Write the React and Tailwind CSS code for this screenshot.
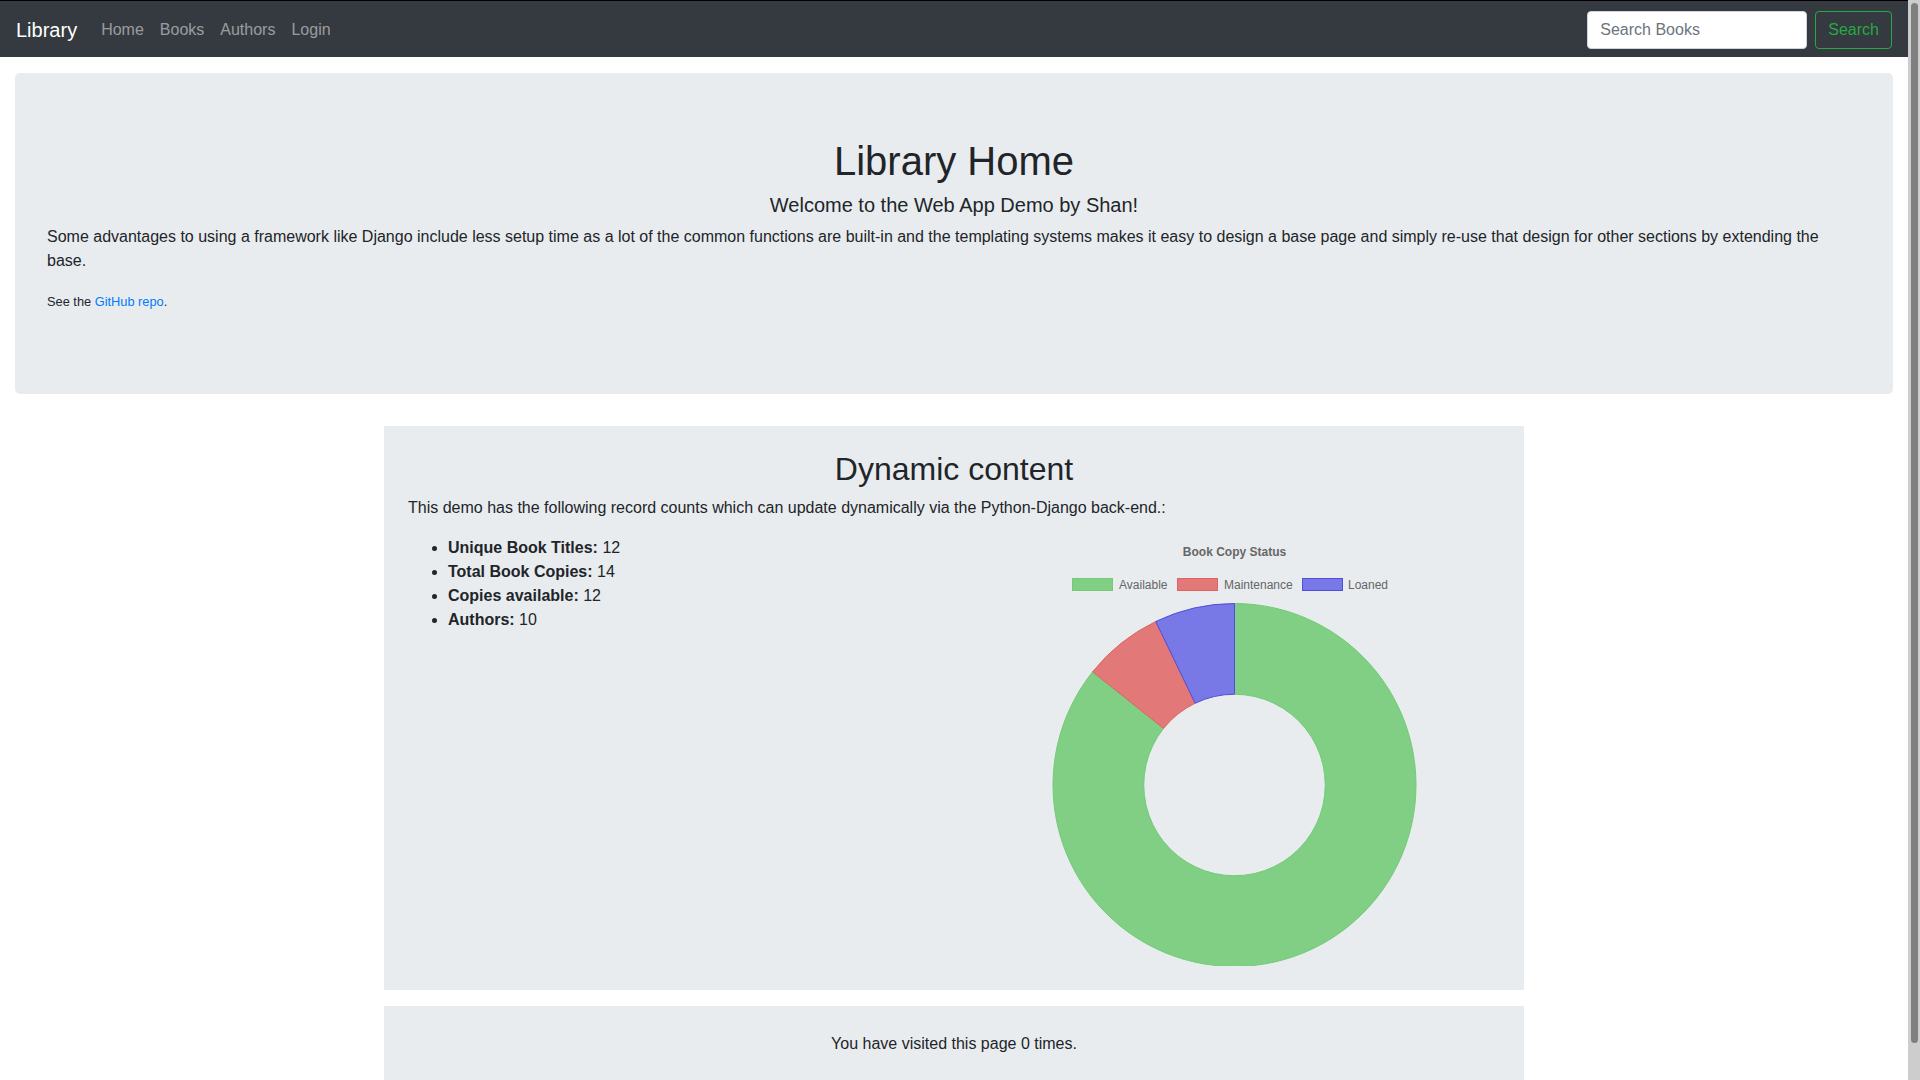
import React from 'react';

const slices = [
  { label: 'Available', value: 12, fill: '#80cf84', stroke: '#72cc76' },
  { label: 'Maintenance', value: 1, fill: '#e27878', stroke: '#dc6464' },
  { label: 'Loaned', value: 1, fill: '#7878e6', stroke: '#4f4fd9' },
];

const arcPath = (cx, cy, r1, r0, a0, a1) => {
  const pt = (r, a) => [cx + r * Math.sin(a), cy - r * Math.cos(a)];
  const large = a1 - a0 > Math.PI ? 1 : 0;
  const [x1, y1] = pt(r1, a0);
  const [x2, y2] = pt(r1, a1);
  const [x3, y3] = pt(r0, a1);
  const [x4, y4] = pt(r0, a0);
  return `M${x1} ${y1} A${r1} ${r1} 0 ${large} 1 ${x2} ${y2} L${x3} ${y3} A${r0} ${r0} 0 ${large} 0 ${x4} ${y4} Z`;
};

const DonutChart = () => {
  const total = slices.reduce((s, d) => s + d.value, 0);
  const cx = 265.5;
  const cy = 249;
  const rOut = 181.5;
  const rIn = 90.75;
  let start = 0;
  const legend = [
    { x: 103, tx: 150 },
    { x: 208, tx: 255 },
    { x: 333, tx: 379 },
  ];

  return (
    <svg width="531" height="430" className="block">
      <text
        x={cx}
        y="20"
        textAnchor="middle"
        fontSize="12"
        fontWeight="bold"
        fill="#666"
        fontFamily="'Liberation Sans', Arial, sans-serif"
      >
        Book Copy Status
      </text>
      {slices.map((s, i) => (
        <g key={s.label}>
          <rect x={legend[i].x + 0.5} y="42.5" width="40" height="12" fill={s.fill} stroke={s.stroke} strokeWidth="1" />
          <text
            x={legend[i].tx}
            y="52.5"
            fontSize="12"
            fill="#666"
            fontFamily="'Liberation Sans', Arial, sans-serif"
          >
            {s.label}
          </text>
        </g>
      ))}
      {slices.map((s) => {
        const a0 = start;
        const a1 = start + (s.value / total) * Math.PI * 2;
        start = a1;
        return (
          <path
            key={s.label}
            d={arcPath(cx, cy, rOut, rIn, a0, a1)}
            fill={s.fill}
            stroke={s.stroke}
            strokeWidth="1"
          />
        );
      })}
    </svg>
  );
};

const App = () => {
  return (
    <div className="flex h-screen overflow-hidden bg-white text-[#212529] font-['Liberation_Sans',Arial,sans-serif]">
      <div className="flex-1 min-w-0">
        {/* Navbar */}
        <nav className="flex items-center justify-between bg-[#343a40] border-t border-black px-4 pt-[9px] pb-[7px]">
          <div className="flex items-center">
            <a className="text-xl leading-[30px] py-[5px] mr-4 text-white">Library</a>
            <a className="px-2 py-2 text-base leading-6 text-white/50">Home</a>
            <a className="px-2 py-2 text-base leading-6 text-white/50">Books</a>
            <a className="px-2 py-2 text-base leading-6 text-white/50">Authors</a>
            <a className="px-2 py-2 text-base leading-6 text-white/50">Login</a>
          </div>
          <div className="flex items-center">
            <input
              type="text"
              placeholder="Search Books"
              className="h-[38px] w-[220px] px-3 mr-2 rounded bg-white border border-[#ced4da] text-base text-[#495057] placeholder:text-[#6c757d] outline-none"
            />
            <button className="h-[38px] px-3 rounded border border-[#28a745] text-base text-[#28a745]">
              Search
            </button>
          </div>
        </nav>

        {/* Jumbotron */}
        <div className="mx-[15px] mt-4 mb-8 rounded-[5px] bg-[#e9ecef] px-8 py-16">
          <h1 className="text-[40px] leading-[1.2] font-medium text-center mb-2">Library Home</h1>
          <h5 className="text-xl leading-[1.2] font-medium text-center mb-2">
            Welcome to the Web App Demo by Shan!
          </h5>
          <p className="text-base leading-6 mb-4">
            Some advantages to using a framework like Django include less setup time as a lot of the common functions are built-in and the templating systems makes it easy to design a base page and simply re-use that design for other sections by extending the base.
          </p>
          <p className="text-base leading-6 mb-4">
            <small className="text-[12.8px]">
              See the <a className="text-[#007bff]">GitHub repo</a>.
            </small>
          </p>
        </div>

        {/* Dynamic content */}
        <div className="w-[1140px] mx-auto">
          <div className="bg-[#e9ecef] p-6">
            <h2 className="text-[32px] leading-[1.2] font-medium text-center mb-2">Dynamic content</h2>
            <p className="text-base leading-6 mb-4">
              This demo has the following record counts which can update dynamically via the Python-Django back-end.:
            </p>
            <div className="grid grid-cols-2 gap-[30px]">
              <div>
                <ul className="list-disc pl-10 mb-4 text-base leading-6">
                  <li><strong>Unique Book Titles:</strong> 12</li>
                  <li><strong>Total Book Copies:</strong> 14</li>
                  <li><strong>Copies available:</strong> 12</li>
                  <li><strong>Authors:</strong> 10</li>
                </ul>
              </div>
              <div>
                <DonutChart />
              </div>
            </div>
          </div>

          <div className="bg-[#e9ecef] px-6 pt-[26px] pb-6 mt-4 mb-8 text-center">
            <p className="text-base leading-6">You have visited this page 0 times.</p>
          </div>
        </div>
      </div>

      {/* Scrollbar */}
      <div className="w-3 shrink-0 bg-[#cdcdcd] pt-[3px] pl-[3px] pr-[2px]">
        <div className="h-[1040px] rounded-full bg-[#7f7f7f]" />
      </div>
    </div>
  );
};

export default App;
